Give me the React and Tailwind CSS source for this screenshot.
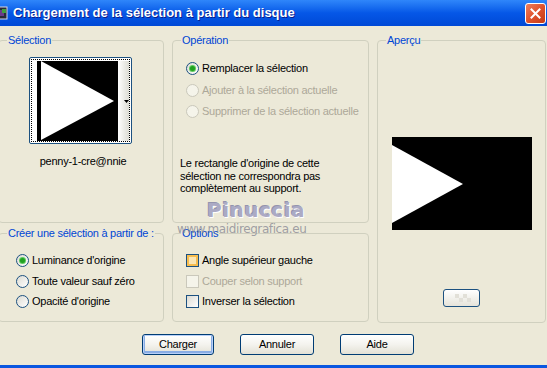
import React from "react";

function Radio({ checked, disabled }) {
  if (disabled) {
    return (
      <span className="w-[13px] h-[13px] rounded-full border border-[#CAC8BB] bg-[#F5F4EA] shrink-0" />
    );
  }
  return (
    <span className="w-[13px] h-[13px] rounded-full border border-[#1C5180] bg-gradient-to-br from-[#DCDBD3] to-[#FFFFFF] shrink-0 flex items-center justify-center">
      {checked && (
        <span className="w-[5px] h-[5px] rounded-full bg-[#21A121] shadow-[0_0_0_1px_#5FCB5F]" />
      )}
    </span>
  );
}

function Check({ hover, disabled }) {
  if (disabled) {
    return <span className="w-[13px] h-[13px] border border-[#CAC8BB] bg-[#F5F4EA] shrink-0" />;
  }
  if (hover) {
    return (
      <span className="w-[13px] h-[13px] border border-[#1C5180] bg-[#FBE6B4] shadow-[inset_0_0_0_2px_#F7BD4E] shrink-0" />
    );
  }
  return (
    <span className="w-[13px] h-[13px] border border-[#1C5180] bg-gradient-to-br from-[#DCDBD3] to-[#FFFFFF] shrink-0" />
  );
}

function Group({ label, className, children }) {
  return (
    <div className={"relative border border-[#D0D0BF] rounded-[4px] " + className}>
      <span className="absolute left-[8px] top-[-8px] px-[1px] bg-[#ECE9D8] text-[#0046D5] leading-[14px] whitespace-nowrap">
        {label}
      </span>
      {children}
    </div>
  );
}

function XPButton({ children, def, className }) {
  return (
    <div
      className={
        "h-[21px] rounded-[3px] border border-[#003C74] bg-gradient-to-b from-[#FFFFFF] via-[#F4F3EE] to-[#E3E1D6] flex items-center justify-center text-black " +
        (def ? "shadow-[inset_0_0_0_1px_#B8D0F8,inset_0_-1px_0_2px_#89ADE4] " : "") +
        className
      }
    >
      {children}
    </div>
  );
}

export default function App() {
  return (
    <div className="relative w-[547px] h-[368px] bg-[#ECE9D8] flex flex-col overflow-hidden font-['Liberation_Sans',Arial,sans-serif] text-[11px] tracking-[-0.25px] text-black">
      {/* Title bar */}
      <div className="h-[26px] shrink-0 flex items-center bg-gradient-to-b from-[#2F86FA] via-[#0557E7] to-[#0049D6] relative tracking-normal">
        <svg width="12" height="14" viewBox="0 0 12 14" className="ml-[-4px]">
          <rect x="0" y="1" width="11" height="12" fill="#2a2a3a" stroke="#d8d8e8" strokeWidth="1" />
          <rect x="2" y="4" width="6" height="6" fill="#6a3a8a" />
          <rect x="6" y="3" width="4" height="4" fill="#3fa040" />
        </svg>
        <span className="ml-[5px] text-white font-bold text-[13px] [text-shadow:1px_1px_0_#0A1D8C]">
          Chargement de la sélection à partir du disque
        </span>
        <div className="ml-auto mr-[1px] w-[21px] h-[21px] rounded-[3px] border border-white bg-gradient-to-br from-[#EC7E5E] via-[#E0522C] to-[#C43A14] flex items-center justify-center">
          <svg width="11" height="11" viewBox="0 0 11 11">
            <path d="M1.5 1.5 L9.5 9.5 M9.5 1.5 L1.5 9.5" stroke="white" strokeWidth="2" strokeLinecap="square" />
          </svg>
        </div>
      </div>

      {/* Body */}
      <div className="flex ml-[-2px] mt-[14px] gap-[8px]">
        {/* Column 1 */}
        <div className="w-[166px] flex flex-col gap-[10px]">
          <Group label="Sélection" className="h-[183px] flex flex-col items-center">
            <div className="mt-[16px] w-[103px] h-[87px] rounded-[2px] border border-[#1C5180] bg-white p-[1px] ml-[-2px]">
              <div className="w-full h-full border border-dotted border-black relative flex">
                <svg width="99" height="83" viewBox="0 0 99 83" className="absolute left-0 top-0">
                  <defs>
                    <linearGradient id="strip" x1="0" x2="1" y1="0" y2="0">
                      <stop offset="0" stopColor="#ffffff" />
                      <stop offset="1" stopColor="#dcdcd4" />
                    </linearGradient>
                  </defs>
                  <rect x="5" y="1" width="81" height="80" fill="#000" />
                  <polygon points="9,1 82,41 9,80" fill="#fff" />
                  <rect x="86" y="1" width="11" height="80" fill="url(#strip)" />
                  <polygon points="92,40 97,40 94.5,43" fill="#000" />
                </svg>
              </div>
            </div>
            <div className="mt-[11px] leading-[13px] ml-[4px]">penny-1-cre@nnie</div>
          </Group>
          <Group label="Créer une sélection à partir de :" className="h-[89px] flex flex-col pt-[16px] pl-[17px]">
            <div className="h-[21px] flex items-center gap-[3px]">
              <Radio checked />
              <span>Luminance d'origine</span>
            </div>
            <div className="h-[20px] flex items-center gap-[3px]">
              <Radio />
              <span>Toute valeur sauf zéro</span>
            </div>
            <div className="h-[20px] flex items-center gap-[3px]">
              <Radio />
              <span>Opacité d'origine</span>
            </div>
          </Group>
        </div>

        {/* Column 2 */}
        <div className="w-[197px] flex flex-col gap-[10px]">
          <Group label="Opération" className="h-[183px] flex flex-col pt-[15px] pl-[13px]">
            <div className="h-[24px] flex items-center gap-[3px]">
              <Radio checked />
              <span>Remplacer la sélection</span>
            </div>
            <div className="h-[21px] flex items-center gap-[3px] text-[#ACA899]">
              <Radio disabled />
              <span>Ajouter à la sélection actuelle</span>
            </div>
            <div className="h-[21px] flex items-center gap-[3px] text-[#ACA899]">
              <Radio disabled />
              <span>Supprimer de la sélection actuelle</span>
            </div>
            <p className="mt-[35px] ml-[-6px] leading-[12.5px]">
              Le rectangle d'origine de cette
              <br />
              sélection ne correspondra pas
              <br />
              complètement au support.
            </p>
          </Group>
          <Group label="Options" className="h-[89px] flex flex-col pt-[16px] pl-[13px]">
            <div className="h-[21px] flex items-center gap-[3px]">
              <Check hover />
              <span>Angle supérieur gauche</span>
            </div>
            <div className="h-[20px] flex items-center gap-[3px] text-[#ACA899]">
              <Check disabled />
              <span>Couper selon support</span>
            </div>
            <div className="h-[20px] flex items-center gap-[3px]">
              <Check />
              <span>Inverser la sélection</span>
            </div>
          </Group>
        </div>

        {/* Column 3 */}
        <Group label="Aperçu" className="w-[169px] h-[283px] flex flex-col items-center">
          <svg width="140" height="93" viewBox="0 0 140 93" className="mt-[96px] ml-[1px]">
            <rect x="0" y="0" width="140" height="93" fill="#000" />
            <polygon points="0,8 71,47 0,86" fill="#fff" />
          </svg>
          <div className="mt-[59px] w-[37px] h-[18px] rounded-[3px] border border-[#1C5180] bg-gradient-to-b from-[#FFFFFF] to-[#E6E4DA] flex items-center justify-center">
            <svg width="22" height="10" viewBox="0 0 22 10">
              <rect x="4" y="1" width="4" height="4" fill="#e2e0d8" />
              <rect x="12" y="1" width="4" height="4" fill="#e2e0d8" />
              <rect x="8" y="5" width="4" height="4" fill="#e2e0d8" />
              <rect x="16" y="5" width="4" height="4" fill="#e2e0d8" />
            </svg>
          </div>
        </Group>
      </div>

      {/* Buttons */}
      <div className="flex mt-[11px] pl-[142px] gap-[26px]">
        <XPButton def className="w-[72px]">Charger</XPButton>
        <XPButton className="w-[74px]">Annuler</XPButton>
        <XPButton className="w-[74px]">Aide</XPButton>
      </div>

      <div className="flex-1" />
      <div className="h-[3px] bg-[#0A57E0]" />

      {/* Watermark */}
      <div className="absolute left-[207px] top-[199px] text-[20px] leading-[22px] tracking-[0.5px] text-[#ABAAC4] font-bold [text-shadow:1px_1px_0_#ffffff,-1px_-1px_0_#9494AE] font-['DejaVu_Sans',sans-serif] pointer-events-none">
        Pinuccia
      </div>
      <div className="absolute left-[177px] top-[222px] text-[12px] leading-[14px] text-[#8A8A94]/80 font-['DejaVu_Sans',sans-serif] tracking-[-0.4px] pointer-events-none">
        www.maidiregrafica.eu
      </div>
    </div>
  );
}
